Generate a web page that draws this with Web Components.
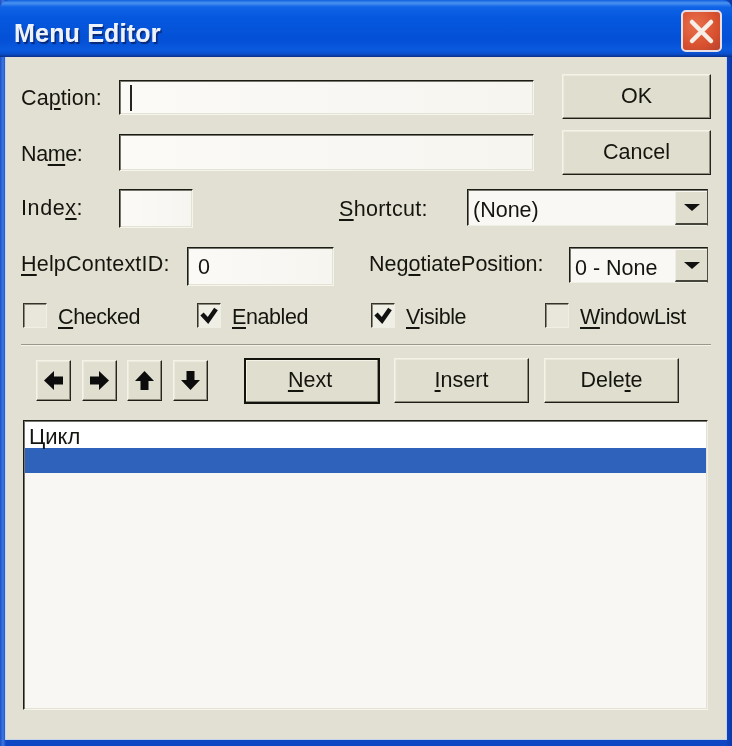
<!DOCTYPE html>
<html><head><meta charset="utf-8"><title>Menu Editor</title>
<style>
html,body{margin:0;padding:0;background:#fff}
body{font:21.5px/1.2 "Liberation Sans",Arial,sans-serif;color:#151510}
u{text-underline-offset:3px;text-decoration-thickness:2px}
</style></head><body>
<xp-window caption="Menu Editor">
  <xp-row top="0">
    <div style="display:flex;flex-direction:column;width:541px;padding-top:6px;gap:19px">
      <xp-row><xp-label w="98" up="1" style="letter-spacing:.1px">Ca<u>p</u>tion:</xp-label><xp-input w="415" h="35"><xp-caret></xp-caret></xp-input></xp-row>
      <xp-row><xp-label w="98" up="3" style="letter-spacing:-.4px">Na<u>m</u>e:</xp-label><xp-input w="415" h="37"></xp-input></xp-row>
    </div>
    <div style="display:flex;flex-direction:column;gap:11px">
      <xp-button w="149" h="45">OK</xp-button>
      <xp-button w="149" h="45">Cancel</xp-button>
    </div>
  </xp-row>
  <xp-row top="14">
    <xp-label w="98" up="2" style="letter-spacing:.6px">Inde<u>x</u>:</xp-label><xp-input w="74" h="39"></xp-input>
    <xp-label w="128" left="146" up="3" style="letter-spacing:.3px"><u>S</u>hortcut:</xp-label><xp-combo w="241" h="37">(None)</xp-combo>
  </xp-row>
  <xp-row top="19">
    <xp-label w="166" up="0" style="letter-spacing:.2px"><u>H</u>elpContextID:</xp-label><xp-input w="147" h="39">0</xp-input>
    <xp-label w="200" left="35" up="0">Neg<u>o</u>tiatePosition:</xp-label><xp-combo w="139" h="36">0 - None</xp-combo>
  </xp-row>
  <xp-row top="17" left="2">
    <xp-check w="174"><u>C</u>hecked</xp-check>
    <xp-check w="174" checked><u>E</u>nabled</xp-check>
    <xp-check w="174" checked><u>V</u>isible</xp-check>
    <xp-check w="166"><u>W</u>indowList</xp-check>
  </xp-row>
  <xp-separator></xp-separator>
  <xp-row top="12" left="15">
    <div style="display:flex;gap:10.5px;width:208px;padding-top:2px">
      <xp-arrow dir="left"></xp-arrow><xp-arrow dir="right"></xp-arrow><xp-arrow dir="up"></xp-arrow><xp-arrow dir="down"></xp-arrow>
    </div>
    <div style="display:flex;align-items:flex-start">
      <xp-button w="136" h="46" default><u>N</u>ext</xp-button>
      <xp-button w="135" h="45" style="margin-left:14px"><u>I</u>nsert</xp-button>
      <xp-button w="135" h="45" style="margin-left:15px">Dele<u>t</u>e</xp-button>
    </div>
  </xp-row>
  <xp-list>
    <xp-item>Цикл</xp-item>
    <xp-item selected></xp-item>
  </xp-list>
</xp-window>
<script>
function def(name, css, html, setup){
  customElements.define(name, class extends HTMLElement{
    constructor(){super();
      const s=this.attachShadow({mode:'open'});
      s.innerHTML='<style>'+css+'</style>'+html;
    }
    connectedCallback(){ if(setup) setup(this); }
  });
}
const sized=e=>{ if(e.hasAttribute('w')) e.style.width=e.getAttribute('w')+'px'; if(e.hasAttribute('h')) e.style.height=e.getAttribute('h')+'px'; };

def('xp-window',`
:host{display:flex;flex-direction:column;width:732px;height:746px;box-sizing:border-box;overflow:hidden;
  background:linear-gradient(90deg,#1a4fc6 0,#3f78e0 3px,#0f46c4 6px,#0f46c4 726px,#0b38aa 732px);filter:blur(.55px);position:relative}
.title{height:57px;flex:none;display:flex;align-items:flex-start;justify-content:space-between;box-sizing:border-box;
  padding:10px 10px 0 14px;border-radius:9px 9px 0 0;
  background:linear-gradient(#0f5fe0 0,#4a92f0 3px,#0f63e6 7px,#0558de 18px,#0450d6 40px,#0a5ade 50px,#0a4ecb 54px,#0b2f86 57px)}
.cap{font:bold 25px/1 "Liberation Sans",Arial,sans-serif;letter-spacing:.2px;color:#eef2fa;text-shadow:1.5px 1.5px 1px #0a2a78,.4px 0 0 #eef2fa;margin-top:11px}
.close{width:41px;height:42px;box-sizing:border-box;border:2px solid #e8dfe6;border-radius:5px;
  background:radial-gradient(circle at 35% 35%,#e8704c,#d9512f 60%,#b8432e);display:flex;align-items:center;justify-content:center}
.close svg{width:29px;height:29px;display:block}
.body{flex:1;margin:0 5px 6px 5px;box-sizing:border-box;padding:17px 15px 0 15px;display:flex;flex-direction:column;
  background:#e2e0d2;border:1px solid #c6d4ea;border-top:none}
`,`<div class="title"><span class="cap"></span><div class="close"><svg viewBox="0 0 29 29"><path d="M5 5L24 24M24 5L5 24" stroke="#f6efe8" stroke-width="4.500" stroke-linecap="round"/></svg></div></div><div class="body"><slot></slot></div>`,
e=>{e.shadowRoot.querySelector('.cap').textContent=e.getAttribute('caption');});

def('xp-row',`:host{display:flex;align-items:flex-start}`,`<slot></slot>`,
e=>{ if(e.hasAttribute('top')) e.style.marginTop=e.getAttribute('top')+'px'; if(e.hasAttribute('left')) e.style.marginLeft=e.getAttribute('left')+'px'; });

def('xp-label',`:host{display:block;flex:none;line-height:34px;white-space:nowrap}`,`<slot></slot>`,
e=>{sized(e); if(e.hasAttribute('left')) e.style.marginLeft=e.getAttribute('left')+'px'; if(e.hasAttribute('up')) e.style.marginTop=e.getAttribute('up')+'px';});

def('xp-input',`:host{display:flex;align-items:center;flex:none;box-sizing:border-box;padding:3px 0 0 10px;
  background:linear-gradient(90deg,#fbfaf7,#f6f5f0);border-top:1px solid #1c1c16;border-left:1px solid #1c1c16;
  border-right:1px solid #f5f4ea;border-bottom:1px solid #f7f6ec;
  box-shadow:inset 1px 1px 0 #77766a,inset -1px -1px 0 #e4e2d4;white-space:nowrap}`,`<slot></slot>`,sized);

def('xp-caret',`:host{display:block;width:2px;height:26px;background:#25251f;margin-top:-3px}`,``);

def('xp-button',`:host{display:flex;align-items:center;justify-content:center;flex:none;box-sizing:border-box;
  background:#e0dece;border-top:1px solid #f4f3e8;border-left:1px solid #f4f3e8;border-right:1px solid #25251d;border-bottom:1px solid #1e1e17;
  box-shadow:inset -1px -1px 0 #8d8b7d,inset 1px 1px 0 #eceadd;white-space:nowrap}
:host([default]){border:2px solid #14140f;box-shadow:inset -1px -1px 0 #8d8b7d,inset 1px 1px 0 #f4f3e8;padding-right:4px}`,`<slot></slot>`,sized);

def('xp-combo',`:host{display:flex;align-items:center;justify-content:space-between;flex:none;box-sizing:border-box;
  padding-left:5px;background:#f9f8f4;border-top:1px solid #1c1c16;border-left:1px solid #1c1c16;border-right:1px solid #4c4b42;border-bottom:1px solid #f0efe4;
  box-shadow:inset 1px 1px 0 #77766a;white-space:nowrap}
span{padding-top:7px}
.b{width:32px;align-self:stretch;background:#e0dece;box-sizing:border-box;margin:2px 0 0;border-bottom:2px solid #45453c;border-left:1px solid #efeee4;display:flex;align-items:center;justify-content:center}
.t{width:0;height:0;border-left:8px solid transparent;border-right:8px solid transparent;border-top:7px solid #111}`,
`<span><slot></slot></span><div class="b"><div class="t"></div></div>`,sized);

def('xp-check',`:host{display:flex;align-items:center;flex:none;height:25px;white-space:nowrap;letter-spacing:-.4px}
.box{width:24px;height:25px;box-sizing:border-box;border-top:1px solid #33332a;border-left:1px solid #33332a;border-right:1px solid #f0efe5;border-bottom:1px solid #f0efe5;box-shadow:inset 1px 1px 0 #8a897c;background:#e9e7dc;margin-right:11px;flex:none}
:host([checked]) .box{background:#f0efe6}
span{padding-top:4px}
svg{display:none;width:22px;height:23px}
:host([checked]) svg{display:block}`,
`<div class="box"><svg viewBox="0 0 22 23"><path d="M4 10L10 16.500L18 5" fill="none" stroke="#111" stroke-width="4.500"/></svg></div><span><slot></slot></span>`,sized);

def('xp-separator',`:host{display:block;width:690px;height:2px;margin-top:16px;background:linear-gradient(#9a988a 50%,#f4f3e9 50%)}`,``);

const arrows={left:'M0 9.500L10 0V5.500H19V13.500H10V19Z',right:'M19 9.500L9 0V5.500H0V13.500H9V19Z',up:'M9.500 0L19 10H13.500V19H5.500V10H0Z',down:'M9.500 19L19 9H13.500V0H5.500V9H0Z'};
def('xp-arrow',`:host{display:flex;align-items:center;justify-content:center;flex:none;width:35px;height:41px;box-sizing:border-box;
  background:#e0dece;border-top:1px solid #f4f3e8;border-left:1px solid #f4f3e8;border-right:1px solid #25251d;border-bottom:1px solid #1e1e17;
  box-shadow:inset -1px -1px 0 #8d8b7d,inset 1px 1px 0 #eceadd}
svg{width:19px;height:19px;display:block}`,`<svg viewBox="0 0 19 19"><path fill="#0c0c0c"/></svg>`,
e=>{e.shadowRoot.querySelector('path').setAttribute('d',arrows[e.getAttribute('dir')]);});

def('xp-list',`:host{display:block;width:685px;height:290px;margin:16px 0 0 2px;box-sizing:border-box;flex:none;font-size:22px;
  background:#f8f7f4;border-top:1px solid #1c1c16;border-left:1px solid #1c1c16;border-right:1px solid #f0efe4;border-bottom:1px solid #f7f6ec;
  box-shadow:inset 1px 1px 0 #77766a,inset -1px -1px 0 #e4e2d4;padding:1px 1px 0 1px}`,`<slot></slot>`);

def('xp-item',`:host{display:block;height:26px;line-height:30px;padding-left:4px;background:#fff;white-space:nowrap}
:host([selected]){height:25px;background:#2f63bb}`,`<slot></slot>`);
</script>
</body></html>
